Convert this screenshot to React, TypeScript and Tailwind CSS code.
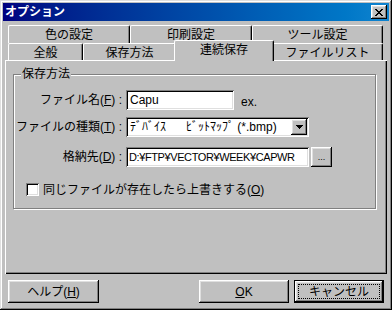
import type { ReactNode } from 'react';

const raised =
  'bg-[#c0c0c0] shadow-[inset_-1px_-1px_#000,inset_1px_1px_#fff,inset_-2px_-2px_#808080,inset_2px_2px_#dfdfdf]';
const sunken =
  'bg-white shadow-[inset_1px_1px_#808080,inset_-1px_-1px_#fff,inset_2px_2px_#000,inset_-2px_-2px_#dfdfdf]';

function CloseGlyph() {
  const rows = ['11000011', '01100110', '00111100', '00011000', '00111100', '01100110', '11000011'];
  return (
    <svg width="8" height="7" viewBox="0 0 8 7" shapeRendering="crispEdges">
      {rows.flatMap((r, y) =>
        r.split('').map((c, x) => (c === '1' ? <rect key={`${x}-${y}`} x={x} y={y} width="1" height="1" fill="#000" /> : null)),
      )}
    </svg>
  );
}

function Tab({ label, w, selected }: { label: string; w: string; selected?: boolean }) {
  if (selected) {
    return (
      <div
        className={`${w} relative z-10 -mx-[2px] -mt-[3px] -mb-px flex h-[21px] items-start justify-center rounded-t-[2px] border-t border-l border-r border-t-white border-l-white border-r-black bg-[#c0c0c0] pt-[3px] shadow-[inset_-1px_0_#808080]`}
      >
        {label}
      </div>
    );
  }
  return (
    <div
      className={`${w} flex h-full items-center justify-center rounded-t-[2px] border-t border-l border-r border-t-white border-l-white border-r-black bg-[#c0c0c0] pt-[1px] shadow-[inset_-1px_0_#808080]`}
    >
      {label}
    </div>
  );
}

function U({ children }: { children: ReactNode }) {
  return <span className="underline underline-offset-[1px]">{children}</span>;
}

export default function App() {
  return (
    <div className="h-[310px] w-[392px] bg-[#c0c0c0] p-[3px] font-['Liberation_Sans','Noto_Sans_CJK_JP',sans-serif] text-[12px] leading-none text-black shadow-[inset_-1px_-1px_#000,inset_1px_1px_#dfdfdf,inset_-2px_-2px_#808080,inset_2px_2px_#fff]">
      {/* title bar */}
      <div className="flex h-[18px] items-center justify-between bg-linear-to-r from-[#000080] to-[#1084d0] pl-[2px] pr-[2px]">
        <span className="font-bold text-white">オプション</span>
        <button className={`${raised} flex h-[14px] w-[16px] items-center justify-center`}>
          <CloseGlyph />
        </button>
      </div>

      <div className="px-[2px] pt-[4px]">
        {/* tabs */}
        <div className="ml-[3px] w-[375px]">
          <div className="flex h-[18px]">
            <Tab label="色の設定" w="w-[122px]" />
            <Tab label="印刷設定" w="w-[122px]" />
            <Tab label="ツール設定" w="w-[131px]" />
          </div>
          <div className="flex h-[17px] items-start">
            <Tab label="全般" w="w-[75px]" />
            <Tab label="保存方法" w="w-[93px]" />
            <Tab label="連続保存" w="w-[100px]" selected />
            <Tab label="ファイルリスト" w="w-[111px]" />
          </div>
        </div>

        {/* panel */}
        <div className="h-[214px] w-[382px] pt-[7px] pl-[8px] shadow-[inset_1px_1px_#fff,inset_-1px_-1px_#000,inset_-2px_-2px_#808080]">
          <fieldset className="h-[142px] w-[363px] border border-[#808080] p-0 shadow-[inset_1px_1px_#fff,1px_1px_#fff]">
            <legend className="ml-[7px] bg-[#c0c0c0] px-[1px] leading-[14px]">保存方法</legend>

            <div className="mt-[9px] grid grid-cols-[108px_auto] items-center gap-x-[4px]">
              <div className="text-right">
                ファイル名(<U>F</U>) :
              </div>
              <div className="flex items-center">
                <div className={`${sunken} flex h-[20px] w-[108px] items-center px-[4px]`}>Capu</div>
                <span className="ml-[7px] pt-[4px]">ex.</span>
              </div>

              <div className="mt-[7px] text-right">
                ファイルの種類(<U>T</U>) :
              </div>
              <div className={`${sunken} mt-[7px] flex h-[20px] w-[183px] items-center justify-between pl-[4px] pr-[2px]`}>
                <span className="whitespace-pre">ﾃﾞﾊﾞｲｽ      ﾋﾞｯﾄﾏｯﾌﾟ (*.bmp)</span>
                <span className={`${raised} flex h-[16px] w-[16px] items-center justify-center`}>
                  <svg width="7" height="4" viewBox="0 0 7 4" shapeRendering="crispEdges">
                    <path d="M0 0h7v1h-1v1h-1v1h-1v1h-1v-1h-1v-1h-1v-1h-1z" fill="#000" />
                  </svg>
                </span>
              </div>

              <div className="mt-[10px] text-right">
                格納先(<U>D</U>) :
              </div>
              <div className="mt-[10px] flex items-center gap-[2px]">
                <div className={`${sunken} flex h-[20px] w-[183px] items-center overflow-hidden whitespace-nowrap px-[3px] text-[11px] tracking-[-0.4px]`}>
                  D:¥FTP¥VECTOR¥WEEK¥CAPWR
                </div>
                <button className={`${raised} flex h-[20px] w-[21px] items-end justify-center pb-[5px] text-[9px]`}>...</button>
              </div>
            </div>

            <label className="mt-[16px] ml-[12px] flex items-center gap-[4px]">
              <span className={`${sunken} h-[13px] w-[13px]`} />
              <span>
                同じファイルが存在したら上書きする(<U>O</U>)
              </span>
            </label>
          </fieldset>
        </div>
      </div>

      {/* buttons */}
      <div className="mt-[6px] flex px-[5px]">
        <button className={`${raised} h-[23px] w-[91px]`}>
          ヘルプ(<U>H</U>)
        </button>
        <button className={`${raised} ml-auto h-[23px] w-[90px]`}>
          <U>O</U>K
        </button>
        <button className="ml-[5px] h-[23px] w-[90px] border border-black bg-[#c0c0c0] p-[3px] shadow-[inset_-1px_-1px_#000,inset_1px_1px_#fff,inset_-2px_-2px_#808080,inset_2px_2px_#dfdfdf]">
          <span className="flex h-full w-full items-center justify-center border border-dotted border-black">キャンセル</span>
        </button>
      </div>
    </div>
  );
}
